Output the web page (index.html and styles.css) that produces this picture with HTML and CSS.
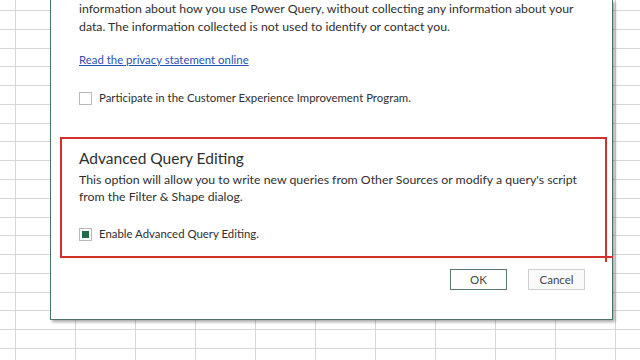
FILE: index.html
```html
<!DOCTYPE html>
<html>
<head>
<meta charset="utf-8">
<link rel="stylesheet" href="styles.css">
</head>
<body>
<div class="sheet">
  <div class="dialog">
    <div class="content">
      <p class="para"><span class="line">information about how you use Power Query, without collecting any information about your</span><span class="line">data. The information collected is not used to identify or contact you.</span></p>
      <a class="link" href="#">Read the privacy statement online</a>
      <label class="check-row first-check"><span class="box"></span><span>Participate in the Customer Experience Improvement Program.</span></label>
      <div class="highlight">
        <h2 class="heading">Advanced Query Editing</h2>
        <p class="desc"><span class="line">This option will allow you to write new queries from Other Sources or modify a query's script</span><span class="line">from the Filter &amp; Shape dialog.</span></p>
        <label class="check-row"><span class="box checked"></span><span>Enable Advanced Query Editing.</span></label>
      </div>
    </div>
    <div class="footer">
      <button class="btn btn-ok">OK</button>
      <button class="btn btn-cancel">Cancel</button>
    </div>
  </div>
</div>
</body>
</html>
```

FILE: styles.css
```css
html, body {
  margin: 0;
  padding: 0;
}
body {
  width: 640px;
  height: 360px;
  overflow: hidden;
  font-family: Lato, "Noto Sans", sans-serif;
  color: #2f2f2f;
  background-color: #fff;
  background-image:
    repeating-linear-gradient(to right, transparent 0, transparent 15px, #d6d6d6 15px, #d6d6d6 16px, transparent 16px, transparent 60px),
    repeating-linear-gradient(to bottom, transparent 0, transparent 10px, #d6d6d6 10px, #d6d6d6 11px, transparent 11px, transparent 18.78px);
}
.sheet {
  padding-left: 50px;
}
.dialog {
  width: 563px;
  height: 320px;
  box-sizing: border-box;
  background: #fff;
  border: 1px solid #50706a;
  border-top: none;
  box-shadow: 2px 2px 3px rgba(0,0,0,0.35);
  display: flex;
  flex-direction: column;
}
.content {
  padding: 0 0 0 28px;
  font-size: 12.3px;
}
.line {
  display: block;
  white-space: nowrap;
}
.para {
  margin: 0;
  line-height: 18px;
}
.link {
  display: block;
  margin-top: 15px;
  font-size: 11.4px;
  color: #2a50b5;
  text-decoration: underline;
  line-height: 18px;
}
.check-row {
  display: flex;
  align-items: center;
  gap: 7px;
  line-height: 18px;
  font-size: 11.4px;
}
.first-check {
  margin-top: 20px;
}
.box {
  width: 11px;
  height: 11px;
  border: 1px solid #b9b9b9;
  background: #fff;
  flex: none;
  display: flex;
  align-items: center;
  justify-content: center;
}
.box.checked::after {
  content: "";
  width: 7px;
  height: 7px;
  background: #1f6b4a;
}
.highlight {
  position: relative;
  margin: 30px 0 0 -19px;
  width: 547px;
  height: 121px;
  border: 2px solid #d3312c;
  padding: 0 0 0 17px;
  box-sizing: border-box;
}
.highlight::before {
  content: "";
  position: absolute;
  right: -8px;
  bottom: -2px;
  width: 8px;
  height: 2px;
  background: #d3312c;
}
.highlight::after {
  content: "";
  position: absolute;
  right: -2px;
  bottom: -6px;
  width: 2px;
  height: 6px;
  background: #d3312c;
}
.heading {
  margin: 9px 0 0 0;
  font-size: 15.5px;
  font-weight: normal;
  line-height: 20px;
  color: #2f2f2f;
}
.desc {
  margin: 3px 0 0 0;
  line-height: 17px;
}
.highlight .check-row {
  margin-top: 20px;
}
.footer {
  display: flex;
  justify-content: flex-end;
  gap: 21px;
  padding: 11px 27px 0 0;
}
.btn {
  width: 57px;
  height: 21px;
  font-family: Lato, "Noto Sans", sans-serif;
  font-size: 11.5px;
  color: #444;
  background: #fff;
  padding: 0;
  line-height: 19px;
}
.btn-ok {
  border: 1px solid #5a7771;
}
.btn-cancel {
  border: 1px solid #cfcfcf;
  background: #fafafa;
}
```
